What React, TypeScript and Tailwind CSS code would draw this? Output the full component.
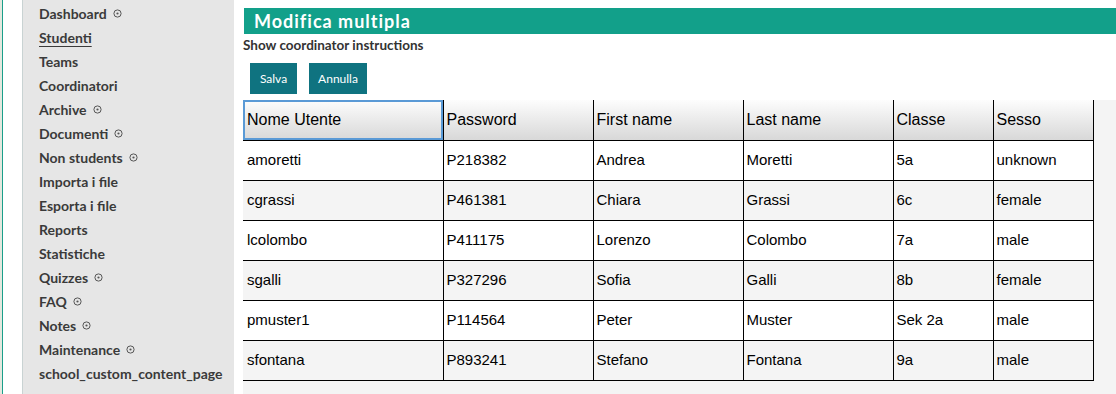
import React from "react";

const menu: { label: string; icon?: boolean; active?: boolean }[] = [
  { label: "Dashboard", icon: true },
  { label: "Studenti", active: true },
  { label: "Teams" },
  { label: "Coordinatori" },
  { label: "Archive", icon: true },
  { label: "Documenti", icon: true },
  { label: "Non students", icon: true },
  { label: "Importa i file" },
  { label: "Esporta i file" },
  { label: "Reports" },
  { label: "Statistiche" },
  { label: "Quizzes", icon: true },
  { label: "FAQ", icon: true },
  { label: "Notes", icon: true },
  { label: "Maintenance", icon: true },
  { label: "school_custom_content_page" },
];

const headers = ["Nome Utente", "Password", "First name", "Last name", "Classe", "Sesso"];
const widths = ["w-[200px]", "w-[150px]", "w-[150px]", "w-[150px]", "w-[100px]", "w-[100px]"];
const rows = [
  ["amoretti", "P218382", "Andrea", "Moretti", "5a", "unknown"],
  ["cgrassi", "P461381", "Chiara", "Grassi", "6c", "female"],
  ["lcolombo", "P411175", "Lorenzo", "Colombo", "7a", "male"],
  ["sgalli", "P327296", "Sofia", "Galli", "8b", "female"],
  ["pmuster1", "P114564", "Peter", "Muster", "Sek 2a", "male"],
  ["sfontana", "P893241", "Stefano", "Fontana", "9a", "male"],
];

function Dot() {
  return (
    <svg width="9" height="9" viewBox="0 0 9 9" className="ml-[6px] mt-[1px]">
      <circle cx="4.5" cy="4.5" r="3.6" fill="none" stroke="#555" strokeWidth="1" />
      <circle cx="4.5" cy="4.5" r="1.1" fill="#555" />
    </svg>
  );
}

export default function App() {
  return (
    <div className="flex h-[394px] w-[1116px] overflow-hidden bg-white" style={{ fontFamily: "Lato, 'Open Sans', sans-serif" }}>
      <div className="w-[2px] bg-[#e4e8df]" />
      <div className="w-px bg-[#1a9f8a]" />
      <div className="w-[19px] bg-white" />
      <div className="w-px bg-[#c9d3d3]" />
      <nav className="w-[211px] bg-[#e6e6e6] pl-[16px] pt-[1px]">
        {menu.map((m) => (
          <div key={m.label} className="flex h-[24px] items-center">
            <span
              className={
                "text-[14px] font-bold text-[#3a3a3a] " +
                (m.active ? "underline underline-offset-[3px] decoration-1" : "")
              }
            >
              {m.label}
            </span>
            {m.icon && <Dot />}
          </div>
        ))}
      </nav>
      <div className="w-[9px] bg-white" />
      <main className="flex flex-1 flex-col pt-[8px]">
        <div className="ml-px flex h-[26px] items-center bg-[#12a08a] pl-[10px]">
          <span className="text-[18px] font-bold tracking-[1px] text-white">Modifica multipla</span>
        </div>
        <div className="mt-[2px] h-[18px] text-[13.5px] font-bold leading-[18px] text-[#333]">
          Show coordinator instructions
        </div>
        <div className="ml-[7px] mt-[9px] flex gap-[12px]">
          <button className="h-[31px] w-[47px] bg-[#0f7380] text-[12px] text-white">Salva</button>
          <button className="h-[31px] w-[58px] bg-[#0f7380] text-[12px] text-white">Annulla</button>
        </div>
        <div className="mt-[6px] flex-1 bg-[#f4f4f4]">
          <table
            className="table-fixed border-collapse text-black"
            style={{ fontFamily: "'Liberation Sans', Arial, sans-serif" }}
          >
            <thead>
              <tr className="h-[40px] bg-gradient-to-b from-[#fdfdfd] to-[#d8d8d8]">
                {headers.map((h, i) => (
                  <th
                    key={h}
                    className={
                      widths[i] +
                      " border-r border-b border-black p-0 text-left text-[16px] font-normal " +
                      (i === 0 ? "pl-[4px] shadow-[inset_0_0_0_2px_#5a9ad6]" : "pl-[3px]")
                    }
                  >
                    {h}
                  </th>
                ))}
              </tr>
            </thead>
            <tbody>
              {rows.map((r, ri) => (
                <tr key={ri} className={"h-[40px] " + (ri % 2 === 0 ? "bg-white" : "bg-[#f4f4f4]")}>
                  {r.map((c, ci) => (
                    <td
                      key={ci}
                      className={
                        widths[ci] +
                        " border-b border-r border-black p-0 text-[15px] " +
                        (ci === 0 ? "pl-[4px]" : "pl-[3px]")
                      }
                    >
                      {c}
                    </td>
                  ))}
                </tr>
              ))}
            </tbody>
          </table>
        </div>
      </main>
    </div>
  );
}
